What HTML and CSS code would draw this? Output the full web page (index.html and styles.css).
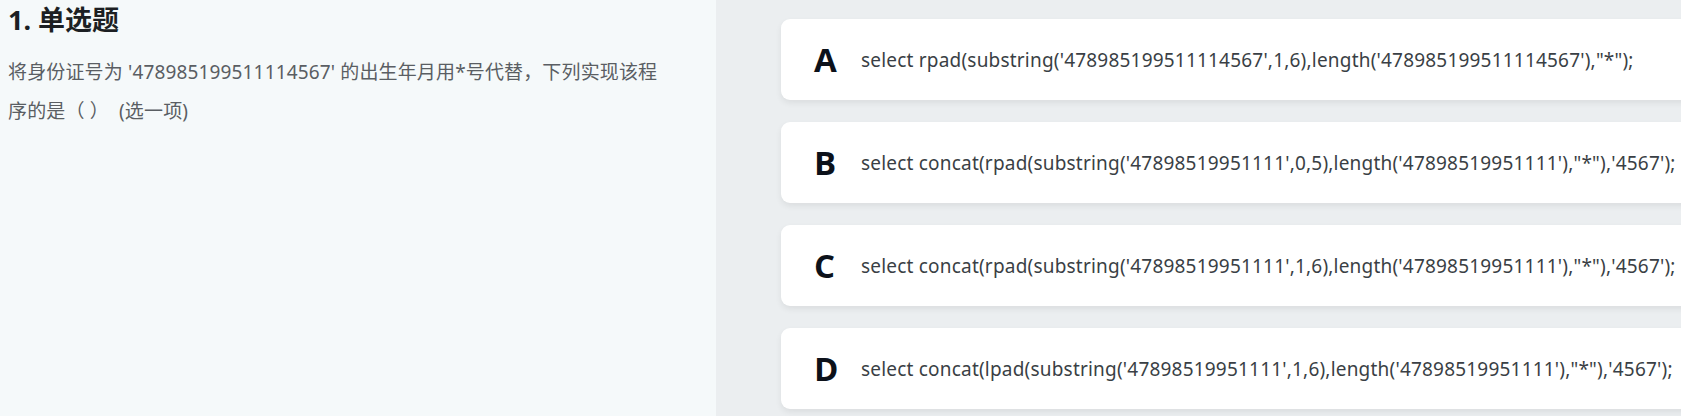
FILE: index.html
```html
<!DOCTYPE html>
<html lang="zh-CN">
<head>
<meta charset="utf-8">
<title>单选题</title>
<link rel="stylesheet" href="styles.css">
</head>
<body>
<div class="page">
  <section class="question">
    <h1 class="q-title">1. 单选题</h1>
    <p class="q-text">将身份证号为 '478985199511114567' 的出生年月用*号代替，下列实现该程序的是（ ）&nbsp;&nbsp;(选一项)</p>
  </section>
  <section class="options">
    <div class="option"><span class="opt-letter">A</span><span class="opt-text">select rpad(substring('478985199511114567',1,6),length('478985199511114567'),"*");</span></div>
    <div class="option"><span class="opt-letter">B</span><span class="opt-text">select concat(rpad(substring('47898519951111',0,5),length('47898519951111'),"*"),'4567');</span></div>
    <div class="option"><span class="opt-letter">C</span><span class="opt-text">select concat(rpad(substring('47898519951111',1,6),length('47898519951111'),"*"),'4567');</span></div>
    <div class="option"><span class="opt-letter">D</span><span class="opt-text">select concat(lpad(substring('47898519951111',1,6),length('47898519951111'),"*"),'4567');</span></div>
  </section>
</div>
</body>
</html>
```
FILE: styles.css
```css
html, body {
  margin: 0;
  padding: 0;
  height: 100%;
  overflow: hidden;
}
body {
  font-family: "Noto Sans", "Noto Sans CJK SC", sans-serif;
}
.page {
  display: flex;
  height: 416px;
  width: 1681px;
  overflow: hidden;
}
.question {
  flex: 0 0 716px;
  box-sizing: border-box;
  padding: 0 52px 0 8px;
  background: #f5f9fa;
}
.q-title {
  margin: 0;
  font-size: 27px;
  line-height: 40px;
  font-weight: 700;
  color: #1c1f23;
}
.q-text {
  margin: 13px 0 0;
  font-size: 19px;
  line-height: 39px;
  letter-spacing: 0.15px;
  color: #5a5e63;
}
.options {
  flex: 1 1 auto;
  box-sizing: border-box;
  padding: 19px 0 0 65px;
  background: #ebeef0;
  display: flex;
  flex-direction: column;
  gap: 22px;
  min-width: 0;
}
.option {
  width: 1100px;
  height: 81px;
  flex: 0 0 81px;
  box-sizing: border-box;
  padding-left: 33px;
  display: flex;
  align-items: center;
  background: #ffffff;
  border-radius: 9px;
  box-shadow: 0 3px 6px rgba(0, 0, 0, 0.07);
}
.opt-letter {
  flex: 0 0 47px;
  font-family: "Open Sans", sans-serif;
  font-weight: 700;
  font-size: 33px;
  line-height: 40px;
  color: #0c111a;
}
.opt-text {
  font-size: 19px;
  letter-spacing: 0.2px;
  color: #3a3f45;
  white-space: nowrap;
}
```
